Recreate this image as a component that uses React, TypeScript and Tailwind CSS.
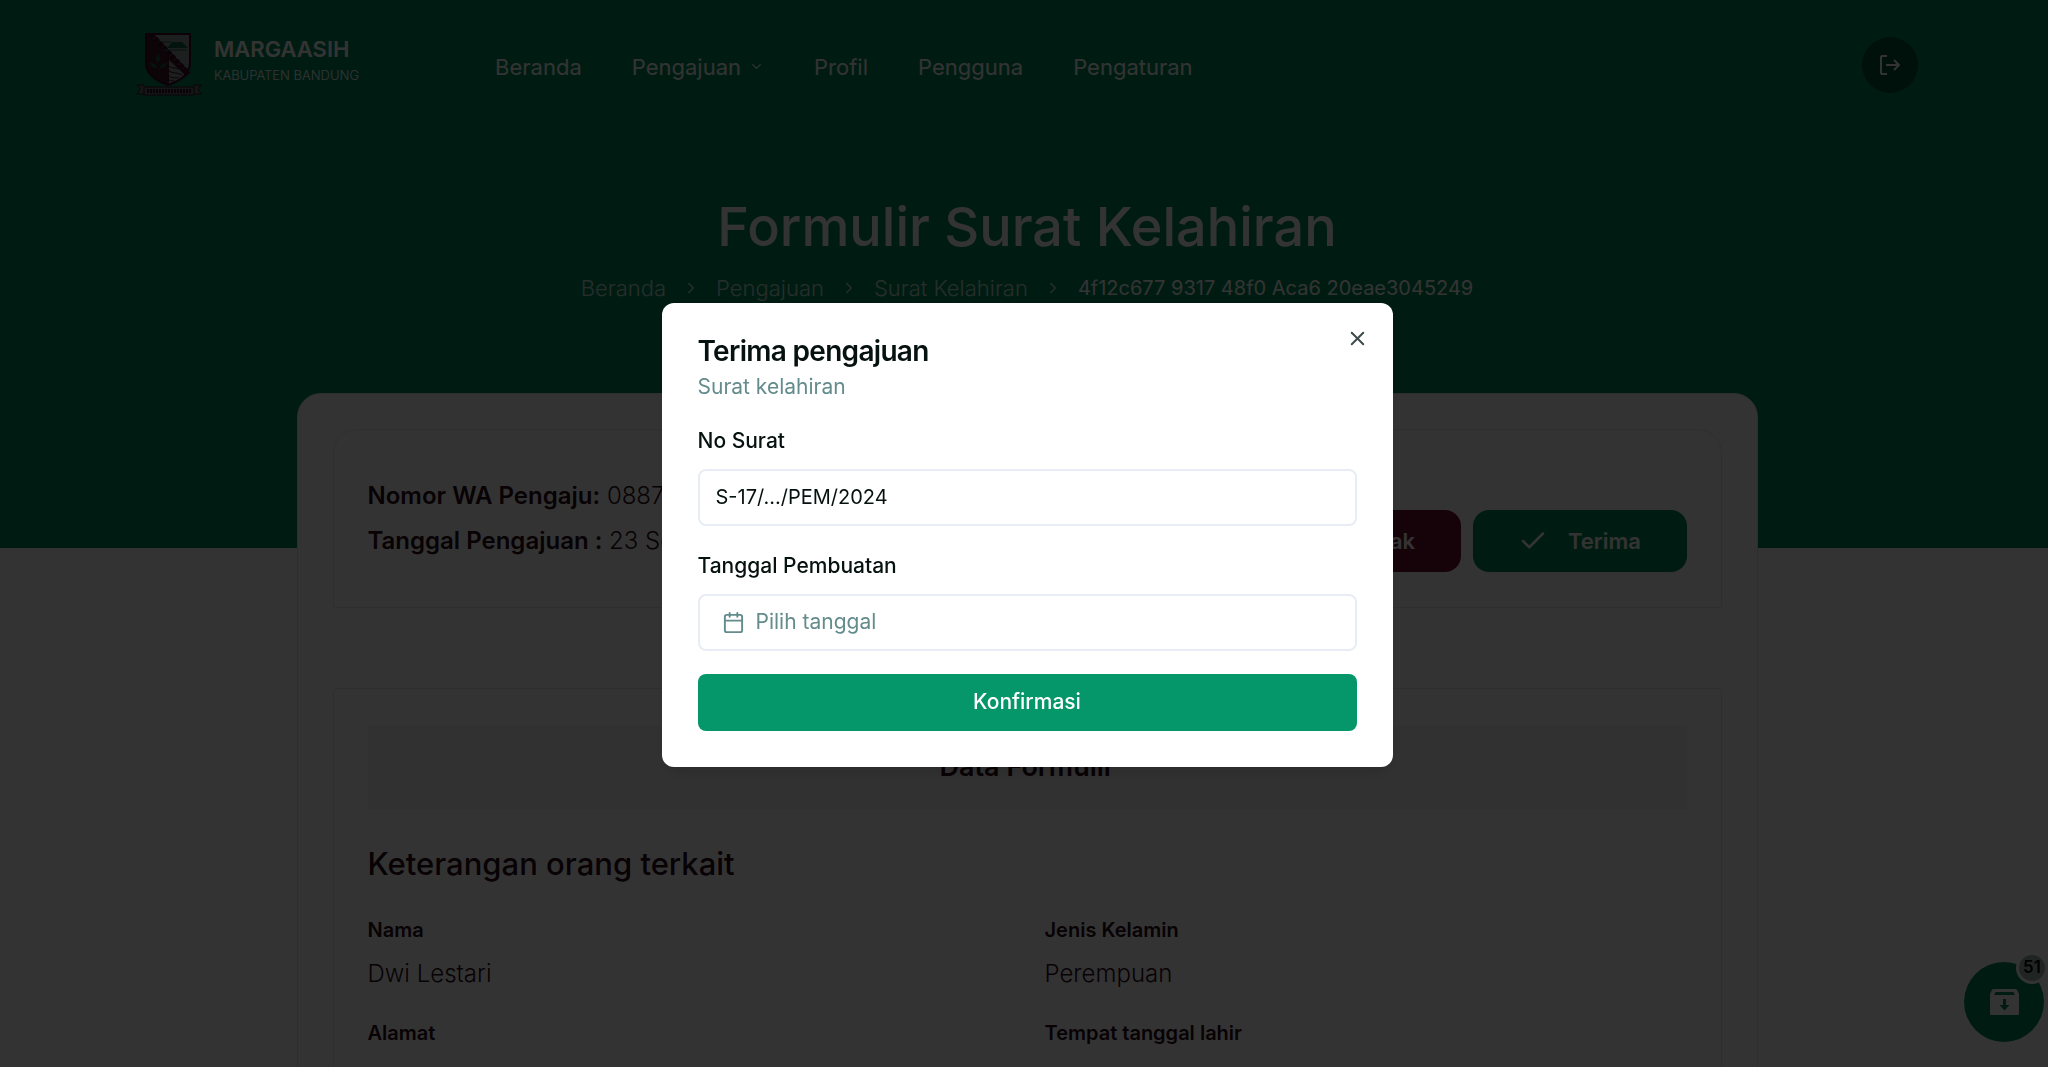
import React, { useState } from "react";
import { Calendar, Check, ChevronDown, ChevronRight, X } from "lucide-react";

const menus = [
  { label: "Beranda" },
  { label: "Pengajuan", dropdown: true },
  { label: "Profil" },
  { label: "Pengguna" },
  { label: "Pengaturan" },
];

const crumbs = ["Beranda", "Pengajuan", "Surat Kelahiran"];

const details = [
  { label: "Nama", value: "Dwi Lestari" },
  { label: "Jenis Kelamin", value: "Perempuan" },
  { label: "Alamat", value: "" },
  { label: "Tempat tanggal lahir", value: "" },
];

function Logo() {
  return (
    <svg width="66" height="63" viewBox="0 0 66 63" aria-hidden="true">
      <path d="M10 1h44v29c0 11-10 18-22 22C20 48 10 41 10 30z" fill="#8b9c94" />
      <path d="M10 1h4l38 40c-4 5-10 8-20 11C20 48 10 41 10 30z" fill="#40182a" />
      <path d="M33 27l16 15c-4 4-9 7-16 9z" fill="#8b9c94" />
      <path
        d="M33 33c3 3 6 1 9 3M33 38c4 3 8 1 13 4M33 43c4 3 7 1 10 2M33 47c2 1 4 1 6 1"
        stroke="#40082a"
        strokeWidth="1"
        fill="none"
      />
      <path
        d="M15 1l38 40"
        stroke="#40082a"
        strokeWidth="5"
        strokeDasharray="4 2"
        fill="none"
      />
      <path d="M16 1l37 39" stroke="#40082a" strokeWidth="2" fill="none" />
      <path d="M31 15l5-6h10l6 6z" fill="#12664a" />
      <path d="M26 9h9M27 17h24" stroke="#12664a" strokeWidth="1" />
      <path
        d="M22 21c-3 4-2 7 0 8c2-1 3-4 0-8zM14 30c1 4 4 5 7 5c-1-3-3-5-7-5zM31 30c-1 4-4 5-7 5c1-3 3-5 7-5z"
        fill="#12664a"
      />
      <path
        d="M10 1h44v29c0 11-10 18-22 22C20 48 10 41 10 30z"
        fill="none"
        stroke="#40082a"
        strokeWidth="2"
      />
      <path
        d="M8 52H1l3 4-3 5h7M57 52h8l-3 4 3 5h-8"
        fill="#5c7368"
        stroke="#40082a"
        strokeWidth="1"
      />
      <rect x="8" y="54" width="50" height="8" fill="#5c7368" stroke="#40082a" />
      <path d="M11 58h44" stroke="#40082a" strokeWidth="4" strokeDasharray="2 1" />
    </svg>
  );
}

function LogoutIcon() {
  return (
    <svg
      width="20"
      height="20"
      viewBox="0 0 20 20"
      fill="none"
      stroke="currentColor"
      strokeWidth="2"
      aria-hidden="true"
    >
      <path d="M7 1H2a1 1 0 0 0-1 1v16a1 1 0 0 0 1 1h5" />
      <path d="M6 10h13M14 5l5 5-5 5" />
    </svg>
  );
}

function ArchiveIcon() {
  return (
    <svg width="29" height="26" viewBox="0 0 29 26" aria-hidden="true">
      <path
        fill="currentColor"
        fillRule="evenodd"
        d="M4 0h21c1 0 1.500.3 2 1l2 4v20a1 1 0 0 1-1 1H1a1 1 0 0 1-1-1V5l2-4c.5-.7 1-1 2-1zM5.500 3L4 6h21l-1.500-3zM13 10v6H9.500l5 5.500 5-5.500H16v-6z"
      />
    </svg>
  );
}

function Navbar() {
  return (
    <nav className="mx-auto flex max-w-[1782px] items-center pt-[33px]">
      <a href="#" className="flex items-center gap-3">
        <Logo />
        <div className="flex flex-col gap-1 pb-2">
          <span className="text-[22px] leading-6 font-semibold">MARGAASIH</span>
          <span className="text-[13px] leading-5 font-light">
            KABUPATEN BANDUNG
          </span>
        </div>
      </a>
      <ul className="ml-[136px] flex items-center gap-[50px] pt-1 text-[22px] leading-7">
        {menus.map((menu) => (
          <li key={menu.label}>
            <a href="#" className="flex items-center gap-2">
              {menu.label}
              {menu.dropdown && <ChevronDown size={15} />}
            </a>
          </li>
        ))}
      </ul>
      <button
        aria-label="Keluar"
        className="ml-auto flex size-14 items-center justify-center rounded-full bg-emerald-900"
      >
        <LogoutIcon />
      </button>
    </nav>
  );
}

function AcceptDialog({ onClose }: { onClose: () => void }) {
  const [noSurat, setNoSurat] = useState("S-17/.../PEM/2024");

  return (
    <div className="fixed inset-0 flex items-center justify-center bg-black/80 pt-0.5 pl-1.5">
      <div
        role="dialog"
        aria-labelledby="dialog-title"
        className="relative w-full max-w-[731px] rounded-xl bg-white p-9 text-[#06120f] shadow-lg"
      >
        <h2
          id="dialog-title"
          className="text-[28px] leading-6 font-semibold tracking-tight"
        >
          Terima pengajuan
        </h2>
        <p className="mt-[10px] text-[21px] leading-7 text-[#648c8c]">
          Surat kelahiran
        </p>
        <form className="mt-[26px]" onSubmit={(e) => e.preventDefault()}>
          <label
            htmlFor="no-surat"
            className="block text-[21px] leading-7 font-medium"
          >
            No Surat
          </label>
          <input
            id="no-surat"
            value={noSurat}
            onChange={(e) => setNoSurat(e.target.value)}
            className="mt-[14px] h-[57px] w-full rounded-lg border-2 border-[#e8ecf4] px-4 text-[20px]"
          />
          <label
            htmlFor="tanggal"
            className="mt-[26px] block text-[21px] leading-7 font-medium"
          >
            Tanggal Pembuatan
          </label>
          <button
            id="tanggal"
            type="button"
            className="mt-[14px] flex h-[57px] w-full items-center gap-[11px] rounded-lg border-2 border-[#e8ecf4] px-[22px] text-[21px] text-[#648c8c]"
          >
            <Calendar size={23} />
            Pilih tanggal
          </button>
          <button
            type="submit"
            className="mt-[23px] h-[57px] w-full rounded-lg bg-[#05966a] text-[21px] font-medium text-white"
          >
            Konfirmasi
          </button>
        </form>
        <button
          aria-label="Tutup"
          onClick={onClose}
          className="absolute top-6 right-6 text-[#3c4a4a]"
        >
          <X size={23} />
        </button>
      </div>
    </div>
  );
}

function App() {
  const [open, setOpen] = useState(true);

  return (
    <div className="h-screen overflow-hidden bg-white font-['Inter',sans-serif] text-[#2a0a18]">
      <header className="h-[548px] bg-[#008c5a] pl-1.5 text-white">
        <Navbar />
        <h1 className="mt-[95px] text-center text-[54px] leading-[72px] font-medium">
          Formulir Surat Kelahiran
        </h1>
        <ol className="mt-[11px] flex items-center justify-center gap-4 text-[22px] leading-7">
          {crumbs.map((crumb) => (
            <li key={crumb} className="flex items-center gap-4 font-light text-white/75">
              <a href="#">{crumb}</a>
              <ChevronRight size={18} />
            </li>
          ))}
          <li className="text-[20px]">4f12c677 9317 48f0 Aca6 20eae3045249</li>
        </ol>
      </header>

      <main className="-mt-[155px] pl-1.5">
        <div className="relative mx-auto max-w-[1461px] rounded-t-3xl border border-gray-200 bg-white px-[35px] pt-[35px]">
          <section className="flex h-[179px] items-end justify-between rounded-t-3xl border border-gray-200 px-[34px] pb-[35px]">
            <div className="flex flex-col gap-[17px] pb-[17px] text-[24px] leading-7">
              <p>
                <b className="font-semibold">Nomor WA Pengaju:</b>{" "}
                <span className="font-light">0887</span>
              </p>
              <p>
                <b className="font-semibold">Tanggal Pengajuan :</b>{" "}
                <span className="font-light">23 September 2024</span>
              </p>
            </div>
            <div className="flex gap-3 text-[22px] font-semibold text-white">
              <button className="flex h-[62px] w-[214px] items-center justify-center gap-9 rounded-2xl bg-[#701030]">
                <X size={30} />
                Tolak
              </button>
              <button
                onClick={() => setOpen(true)}
                className="flex h-[62px] w-[214px] items-center justify-center gap-5 rounded-2xl bg-[#008c5a]"
              >
                <Check size={30} strokeWidth={2} />
                Terima
              </button>
            </div>
          </section>

          <section className="mt-20 h-[400px] rounded-t-sm border border-gray-200 px-[34px] pt-9">
            <h2 className="bg-gray-100 py-6 text-center text-[27px] leading-9 font-semibold">
              Data Formulir
            </h2>
            <h3 className="mt-[37px] text-[31px] leading-9 font-medium">
              Keterangan orang terkait
            </h3>
            <dl className="mt-[34px] grid grid-cols-2 gap-x-[35px] gap-y-[31px]">
              {details.map((item) => (
                <div key={item.label}>
                  <dt className="text-[20px] leading-7 font-semibold">
                    {item.label}
                  </dt>
                  <dd className="mt-4 text-[24px] leading-7 font-light">
                    {item.value}
                  </dd>
                </div>
              ))}
            </dl>
          </section>
        </div>
      </main>

      <button
        aria-label="Arsip"
        className="fixed right-1 bottom-[25px] flex size-20 items-center justify-center rounded-full bg-[#008c5a] text-white"
      >
        <ArchiveIcon />
        <span className="absolute -top-[10px] -right-1 flex size-8 items-center justify-center rounded-full border-3 border-white bg-[#a0b4ac] text-[17px] font-semibold text-black">
          51
        </span>
      </button>

      {open && <AcceptDialog onClose={() => setOpen(false)} />}
    </div>
  );
}

export default App;
